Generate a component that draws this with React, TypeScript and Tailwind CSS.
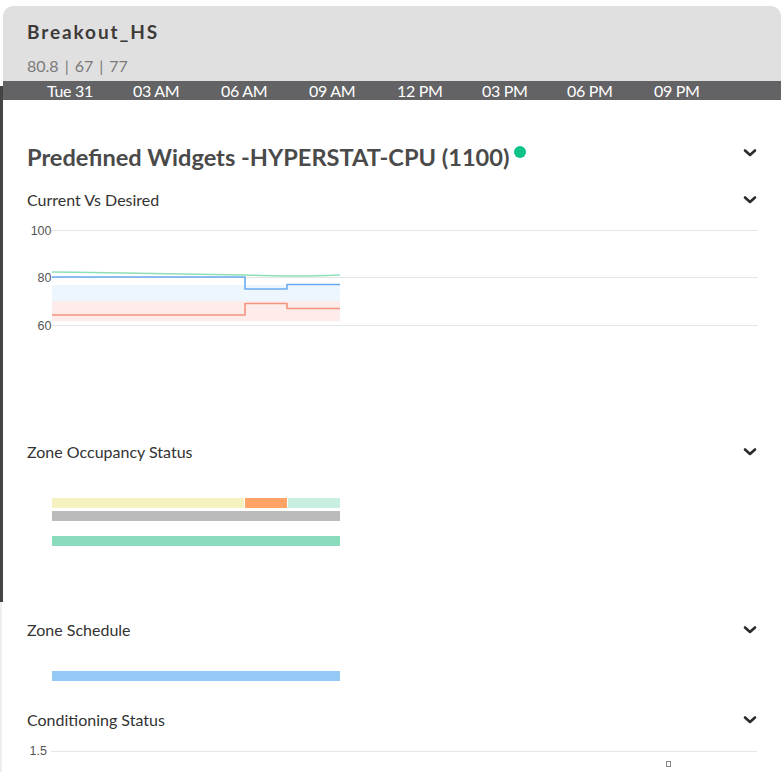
import React from "react";

const Chevron = () => (
  <svg width="14" height="10" viewBox="0 0 14 10" className="shrink-0">
    <path d="M2 2.5 L7 7 L12 2.5" fill="none" stroke="#2b2b2b" strokeWidth="2.6" strokeLinecap="round" strokeLinejoin="round" />
  </svg>
);

const times: [string, number][] = [
  ["Tue 31", 86],
  ["03 AM", 88],
  ["06 AM", 88],
  ["09 AM", 88],
  ["12 PM", 85],
  ["03 PM", 85],
  ["06 PM", 87],
  ["09 PM", 87],
];

const SubHeader = ({ title, className = "" }: { title: string; className?: string }) => (
  <div className={`flex h-[20px] items-center justify-between ${className}`}>
    <span className="text-[16px] leading-none text-[#333]">{title}</span>
    <Chevron />
  </div>
);

const CurrentChart = () => (
  <svg width="731" height="130" viewBox="0 0 731 130" className="block">
    <line x1="25" x2="731" y1="20.5" y2="20.5" stroke="#e6e6e6" strokeWidth="1" />
    <line x1="25" x2="731" y1="67.5" y2="67.5" stroke="#e6e6e6" strokeWidth="1" />
    <line x1="25" x2="731" y1="115.5" y2="115.5" stroke="#e6e6e6" strokeWidth="1" />
    <g fontFamily="'Liberation Sans', Arial, sans-serif" fontSize="12.5" fill="#555" textAnchor="end">
      <text x="24.5" y="24.5">100</text>
      <text x="24.5" y="71.5">80</text>
      <text x="24.5" y="119.5">60</text>
    </g>
    <rect x="25" y="75" width="288" height="16" fill="#eef6fd" />
    <rect x="25" y="91" width="288" height="20" fill="#fdecea" />
    <path d="M25 62 C 100 63, 180 64, 218 65 S 260 66, 270 66 S 300 65.5, 313 65" fill="none" stroke="#8fe0b8" strokeWidth="1.6" />
    <path d="M25 67 L218 67 L218 79 L260 79 L260 74.5 L313 74.5" fill="none" stroke="#6aaaf0" strokeWidth="1.6" strokeLinejoin="round" />
    <path d="M25 105 L218 105 L218 93.5 L260 93.5 L260 98.5 L313 98.5" fill="none" stroke="#f5937e" strokeWidth="1.6" strokeLinejoin="round" />
  </svg>
);

export default function App() {
  return (
    <div
      className="relative h-[772px] w-[781px] overflow-hidden bg-white"
      style={{ fontFamily: "Lato, 'Open Sans', sans-serif" }}
    >
      {/* header */}
      <div className="pt-[6px]">
        <div className="ml-[3px] h-[75px] rounded-t-[10px] bg-[#e0e0e0] pl-[24px]">
          <div className="pt-[14px] text-[19px] font-bold leading-[24px] tracking-[0.1em] text-[#3d3a38]">
            Breakout_HS
          </div>
          <div className="flex pt-[12px] text-[16px] leading-[20px] text-[#7a7a7a]">
            <span>80.8</span>
            <span className="mx-[6px]">|</span>
            <span>67</span>
            <span className="mx-[6px]">|</span>
            <span>77</span>
          </div>
        </div>
        <div className="ml-[3px] flex h-[19px] items-center bg-[#636366] pl-[44px] text-[16px] leading-none tracking-[-0.02em] text-white">
          {times.map(([t, w]) => (
            <span key={t} className="shrink-0" style={{ width: w }}>
              {t}
            </span>
          ))}
        </div>
      </div>

      <div className="flex">
        {/* left strip */}
        <div className="flex w-[3px] shrink-0 flex-col">
          <div className="-mt-[14px] h-[516px] w-[3px] bg-[#444]" />
          <div className="h-[200px] w-[2px] bg-[#eeeeee]" />
        </div>

        <div className="flex w-[778px] flex-col pl-[24px] pr-[24px]">
          {/* title */}
          <div className="mt-[42px] flex h-[30px] items-center justify-between">
            <div className="flex items-start">
              <span className="text-[23.6px] font-bold leading-[30px] text-[#4a4a4a]">
                Predefined Widgets -HYPERSTAT-CPU (1100)
              </span>
              <span className="ml-[5px] mt-[4px] h-[12px] w-[12px] rounded-full bg-[#0fc28a]" />
            </div>
            <div className="-mt-[8px]">
              <Chevron />
            </div>
          </div>

          <SubHeader title="Current Vs Desired" className="mt-[18px]" />
          <CurrentChart />

          <SubHeader title="Zone Occupancy Status" className="mt-[102px]" />
          <div className="ml-[25px] mt-[36px] flex h-[10px] w-[288px] gap-[1px]">
            <div className="h-full w-[192px] bg-[#f5f2c0]" />
            <div className="h-full w-[42px] bg-[#ffa466]" />
            <div className="h-full flex-1 bg-[#c8f0e0]" />
          </div>
          <div className="ml-[25px] mt-[3px] h-[10px] w-[288px] bg-[#bbbbbb]" />
          <div className="ml-[25px] mt-[15px] h-[10px] w-[288px] bg-[#8adcbc]" />

          <SubHeader title="Zone Schedule" className="mt-[74px]" />
          <div className="ml-[25px] mt-[31px] h-[10px] w-[288px] bg-[#96c8f5]" />

          <SubHeader title="Conditioning Status" className="mt-[29px]" />
          <div className="mt-[14px] flex h-[14px] items-center">
            <span
              className="w-[24px] pr-[4px] text-right text-[12.5px] leading-none text-[#555]"
              style={{ fontFamily: "'Liberation Sans', Arial, sans-serif" }}
            >
              1.5
            </span>
            <div className="h-[1px] flex-1 bg-[#e6e6e6]" />
          </div>
          <div className="ml-[639px] mt-[3px] h-[6px] w-[5px] border border-[#888]" />
        </div>
      </div>
    </div>
  );
}
